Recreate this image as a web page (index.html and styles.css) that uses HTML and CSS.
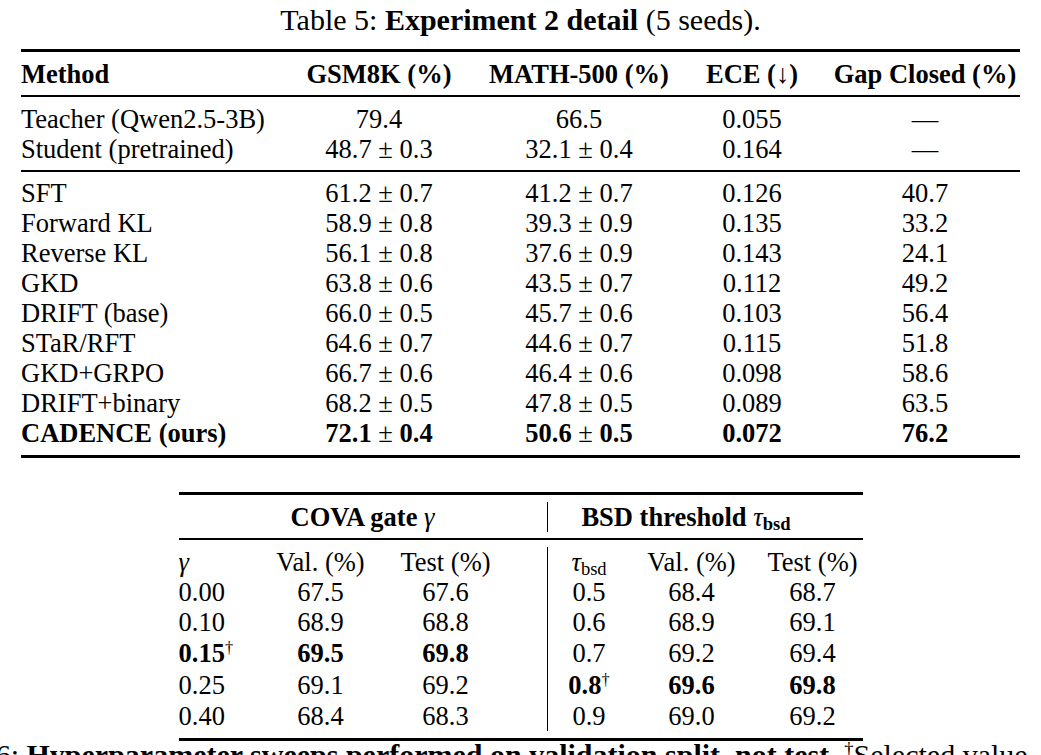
FILE: index.html
```html
<!DOCTYPE html>
<html lang="en">
<head>
  <meta charset="UTF-8">
  <meta name="viewport" content="width=device-width, initial-scale=1.0">
  <title>Experiment 2 detail</title>
  <link rel="stylesheet" href="styles.css">
</head>
<body>
  <div class="page">
    <div class="caption">Table 5: <b>Experiment 2 detail</b> (5 seeds).</div>

    <!-- main results -->
    <div class="results">
      <div class="group head">
        <div class="row">
          <span class="name">Method</span>
          <span>GSM8K (%)</span>
          <span>MATH-500 (%)</span>
          <span>ECE (<span class="plain">↓</span>)</span>
          <span>Gap Closed (%)</span>
        </div>
      </div>
      <div class="group">
        <div class="row">
          <span class="name">Teacher (Qwen2.5-3B)</span>
          <span>79.4</span>
          <span>66.5</span>
          <span>0.055</span>
          <span>—</span>
        </div>
        <div class="row">
          <span class="name">Student (pretrained)</span>
          <span>48.7 <span class="pm">±</span> 0.3</span>
          <span>32.1 <span class="pm">±</span> 0.4</span>
          <span>0.164</span>
          <span>—</span>
        </div>
      </div>
      <div class="group last">
        <div class="row">
          <span class="name">SFT</span>
          <span>61.2 <span class="pm">±</span> 0.7</span>
          <span>41.2 <span class="pm">±</span> 0.7</span>
          <span>0.126</span>
          <span>40.7</span>
        </div>
        <div class="row">
          <span class="name">Forward KL</span>
          <span>58.9 <span class="pm">±</span> 0.8</span>
          <span>39.3 <span class="pm">±</span> 0.9</span>
          <span>0.135</span>
          <span>33.2</span>
        </div>
        <div class="row">
          <span class="name">Reverse KL</span>
          <span>56.1 <span class="pm">±</span> 0.8</span>
          <span>37.6 <span class="pm">±</span> 0.9</span>
          <span>0.143</span>
          <span>24.1</span>
        </div>
        <div class="row">
          <span class="name">GKD</span>
          <span>63.8 <span class="pm">±</span> 0.6</span>
          <span>43.5 <span class="pm">±</span> 0.7</span>
          <span>0.112</span>
          <span>49.2</span>
        </div>
        <div class="row">
          <span class="name">DRIFT (base)</span>
          <span>66.0 <span class="pm">±</span> 0.5</span>
          <span>45.7 <span class="pm">±</span> 0.6</span>
          <span>0.103</span>
          <span>56.4</span>
        </div>
        <div class="row">
          <span class="name">STaR/RFT</span>
          <span>64.6 <span class="pm">±</span> 0.7</span>
          <span>44.6 <span class="pm">±</span> 0.7</span>
          <span>0.115</span>
          <span>51.8</span>
        </div>
        <div class="row">
          <span class="name">GKD+GRPO</span>
          <span>66.7 <span class="pm">±</span> 0.6</span>
          <span>46.4 <span class="pm">±</span> 0.6</span>
          <span>0.098</span>
          <span>58.6</span>
        </div>
        <div class="row">
          <span class="name">DRIFT+binary</span>
          <span>68.2 <span class="pm">±</span> 0.5</span>
          <span>47.8 <span class="pm">±</span> 0.5</span>
          <span>0.089</span>
          <span>63.5</span>
        </div>
        <div class="row best">
          <span class="name">CADENCE (ours)</span>
          <span>72.1 <span class="pm">±</span> 0.4</span>
          <span>50.6 <span class="pm">±</span> 0.5</span>
          <span>0.072</span>
          <span>76.2</span>
        </div>
      </div>
    </div>

    <!-- hyperparameter sweeps -->
    <div class="sweeps">
      <div class="group head">
        <div class="row">
          <span class="span-left">COVA gate <i class="plain">γ</i></span>
          <span class="span-right">BSD threshold <i class="plain">τ</i><sub>bsd</sub></span>
        </div>
      </div>
      <div class="group last">
        <div class="row">
          <span class="first"><i>γ</i></span>
          <span>Val. (%)</span>
          <span>Test (%)</span>
          <span class="gap"></span>
          <span class="bar"><i>τ</i><sub>bsd</sub></span>
          <span>Val. (%)</span>
          <span class="tail">Test (%)</span>
        </div>
        <div class="row">
          <span class="first">0.00</span>
          <span>67.5</span>
          <span>67.6</span>
          <span class="gap"></span>
          <span class="bar">0.5</span>
          <span>68.4</span>
          <span class="tail">68.7</span>
        </div>
        <div class="row">
          <span class="first">0.10</span>
          <span>68.9</span>
          <span>68.8</span>
          <span class="gap"></span>
          <span class="bar">0.6</span>
          <span>68.9</span>
          <span class="tail">69.1</span>
        </div>
        <div class="row tall">
          <span class="first"><b>0.15</b><sup>†</sup></span>
          <span><b>69.5</b></span>
          <span><b>69.8</b></span>
          <span class="gap"></span>
          <span class="bar">0.7</span>
          <span>69.2</span>
          <span class="tail">69.4</span>
        </div>
        <div class="row tall">
          <span class="first">0.25</span>
          <span>69.1</span>
          <span>69.2</span>
          <span class="gap"></span>
          <span class="bar"><b>0.8</b><sup>†</sup></span>
          <span><b>69.6</b></span>
          <span class="tail"><b>69.8</b></span>
        </div>
        <div class="row">
          <span class="first">0.40</span>
          <span>68.4</span>
          <span>68.3</span>
          <span class="gap"></span>
          <span class="bar">0.9</span>
          <span>69.0</span>
          <span class="tail">69.2</span>
        </div>
      </div>
    </div>

    <div class="caption below">Table 6: <b>Hyperparameter sweeps performed on validation split, not test.</b> <sup>†</sup>Selected value</div>
  </div>
</body>
</html>
```

FILE: styles.css
```css
* {
  margin: 0;
  padding: 0;
  box-sizing: border-box;
}

body {
  width: 1041px;
  height: 755px;
  overflow: hidden;
  background: #fff;
  color: #000;
  font-family: "Liberation Serif", "Times New Roman", serif;
  font-size: 26.5px;
  line-height: 30px;
}

.page {
  padding-top: 3px;
}

.caption {
  font-size: 30px;
  line-height: 34px;
  text-align: center;
  margin-bottom: 12px;
  white-space: nowrap;
}

.caption.below {
  text-align: left;
  margin: -3px 0 0 -78px;
}

b {
  font-weight: bold;
}

i {
  font-style: italic;
}

.plain,
.pm {
  font-weight: normal;
}

sup {
  font-size: 62%;
  line-height: 0;
  vertical-align: 0.55em;
  font-weight: normal;
}

sub {
  font-size: 70%;
  line-height: 0;
  vertical-align: -0.2em;
}

/* shared rules, booktabs style */
.results,
.sweeps {
  border-top: 3px solid #000;
}

.group {
  padding: 7px 0 6px;
  border-bottom: 2px solid #000;
}

.group.last {
  padding: 7px 0 7px;
  border-bottom: 3px solid #000;
}

.head {
  font-weight: bold;
}

/* table 5 */
.results {
  width: 999px;
  margin-left: 21px;
}

.results .group.last {
  padding-top: 6px;
}

.results .row {
  display: grid;
  grid-template-columns: 253px 210px 190px 156px 190px;
  text-align: center;
  white-space: nowrap;
}

.results .name {
  text-align: left;
}

.results .best {
  font-weight: bold;
}

/* table 6 */
.sweeps {
  width: 684px;
  margin: 34px auto 0;
}

.sweeps .row {
  display: grid;
  grid-template-columns: 80px 124px 126px 38px 84px 122px 110px;
  text-align: center;
  white-space: nowrap;
}

.sweeps .row.tall {
  line-height: 32px;
}

.sweeps .head .row {
  grid-template-columns: 368px 316px;
}

.sweeps .first {
  text-align: left;
}

.sweeps .bar,
.sweeps .span-right {
  border-left: 1.5px solid #000;
}

.sweeps .span-right {
  padding-right: 38px;
}

.sweeps .tail {
  padding-left: 10px;
}
```
